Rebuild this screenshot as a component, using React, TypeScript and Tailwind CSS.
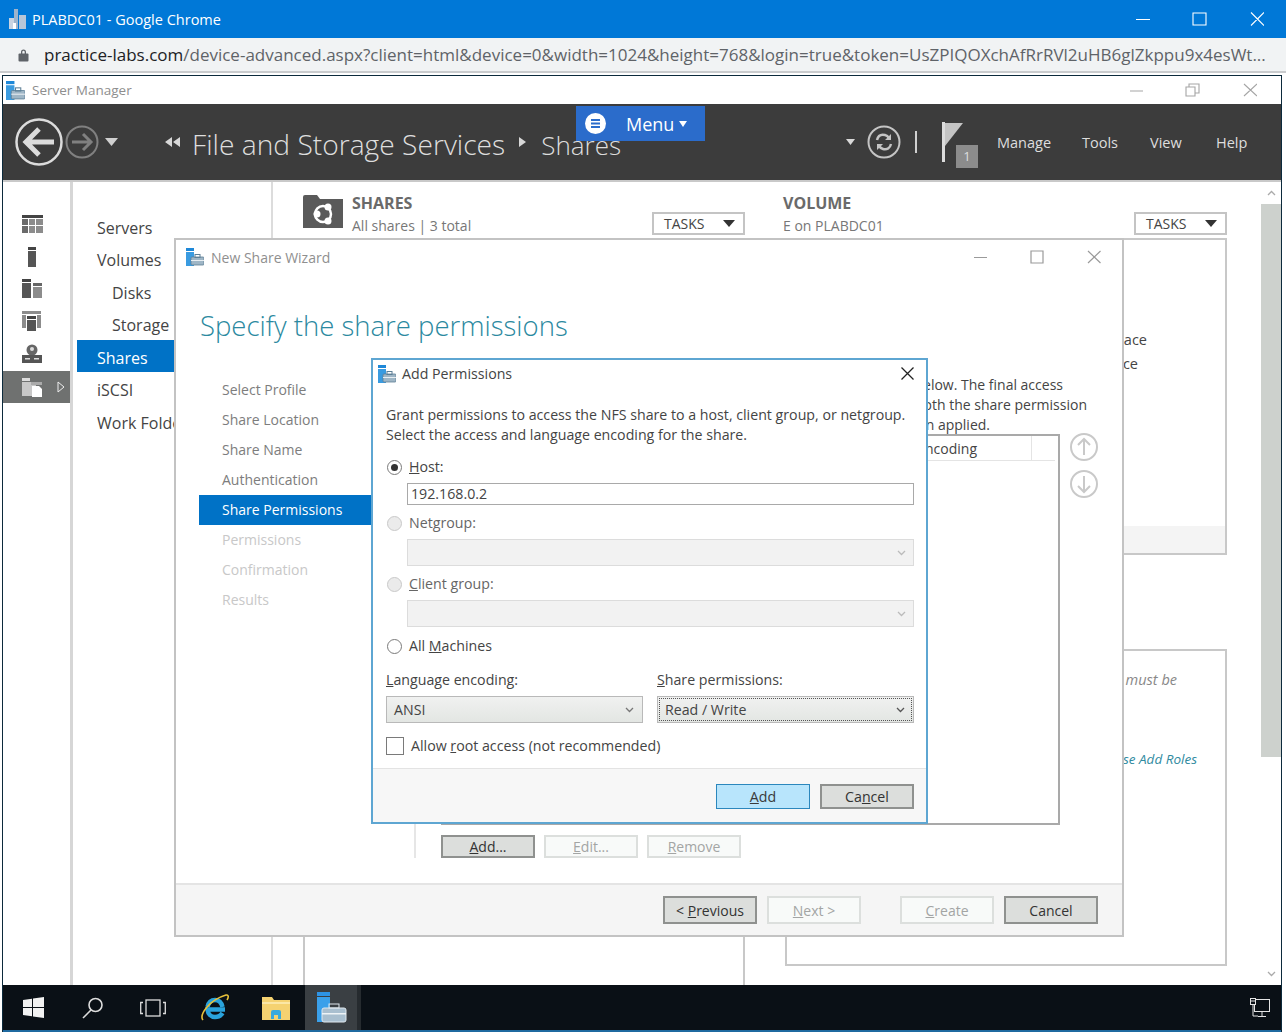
const SmIcon = ({ className }: { className: string }) => (
  <svg className={className} viewBox="0 0 18 18">
    <rect x="0" y="0" width="8" height="3" fill="#1e88d8" />
    <rect x="0" y="4" width="8" height="14" fill="#3a9be0" />
    <rect x="5" y="9" width="13" height="8" rx="1" fill="#9fb6c6" stroke="#5d7f96" strokeWidth="0.8" />
    <rect x="9" y="6.5" width="5" height="3" fill="none" stroke="#5d7f96" />
    <rect x="5" y="12" width="13" height="1" fill="#e8eef2" />
  </svg>
)

const Btn = ({ children, kind = "normal", className = "" }: { children: React.ReactNode; kind?: "normal" | "off" | "main"; className?: string }) => {
  if (kind === "off") {
    return <div className={`w-[94px] flex items-center justify-center border-2 border-[#dcdfdd] bg-[#f8faf9] text-[#a3a5a4] ${className}`}>{children}</div>
  }
  if (kind === "main") {
    return <div className={`w-[94px] flex items-center justify-center border border-[#2b87bd] bg-[#b8e5fc] text-[#3a3a3a] ${className}`}>{children}</div>
  }
  return <div className={`w-[94px] flex items-center justify-center border-2 border-[#8f918f] bg-[#dcdedc] text-[#333] ${className}`}>{children}</div>
}

const Chevron = ({ color = "#777" }: { color?: string }) => (
  <svg className="w-[9px] h-[6px]" viewBox="0 0 9 6" fill="none" stroke={color} strokeWidth="1.3">
    <path d="M1 1l3.5 3.5L8 1" />
  </svg>
)

const Radio = ({ on = false, off = false }: { on?: boolean; off?: boolean }) => (
  <span className={`w-[15px] h-[15px] rounded-full border flex items-center justify-center ${off ? "border-[#c9c9c9] bg-[#ebebeb]" : "border-[#7a7a7a] bg-white"}`}>
    {on && <span className="w-[7px] h-[7px] rounded-full bg-[#333]" />}
  </span>
)

const railIcon = "w-[22px] h-[22px]"

const NavRail = () => (
  <div className="w-[70px] border-r-[3px] border-[#d6d6d6] pt-[26px] flex flex-col shrink-0">
    <div className="h-[32px] flex items-center pl-[19px]">
      <svg className={railIcon} viewBox="0 0 22 22" fill="#6a6a6a">
        <rect x="0" y="2" width="21" height="3" fill="#444" />
        <rect x="0" y="6" width="6" height="6" /><rect x="7" y="6" width="6" height="6" fill="#8c8c8c" /><rect x="14" y="6" width="7" height="6" fill="#8c8c8c" />
        <rect x="0" y="13" width="6" height="7" /><rect x="7" y="13" width="6" height="7" fill="#8c8c8c" /><rect x="14" y="13" width="7" height="7" fill="#8c8c8c" />
      </svg>
    </div>
    <div className="h-[33px] flex items-center pl-[19px]">
      <svg className={railIcon} viewBox="0 0 22 22" fill="#555">
        <rect x="6" y="1" width="8" height="3" fill="#444" />
        <rect x="6" y="5" width="8" height="16" />
      </svg>
    </div>
    <div className="h-[32px] flex items-center pl-[19px]">
      <svg className={railIcon} viewBox="0 0 22 22">
        <rect x="0" y="1" width="9" height="3" fill="#444" /><rect x="0" y="5" width="9" height="15" fill="#555" />
        <rect x="11" y="5" width="9" height="3" fill="#666" /><rect x="11" y="9" width="9" height="11" fill="#8c8c8c" />
      </svg>
    </div>
    <div className="h-[32px] flex items-center pl-[19px]">
      <svg className={railIcon} viewBox="0 0 22 22">
        <rect x="0" y="1" width="19" height="3" fill="#8c8c8c" /><rect x="0" y="5" width="4" height="13" fill="#8c8c8c" /><rect x="15" y="5" width="4" height="13" fill="#8c8c8c" />
        <rect x="5" y="6" width="9" height="3" fill="#444" /><rect x="5" y="10" width="9" height="11" fill="#555" />
      </svg>
    </div>
    <div className="h-[34px] flex items-center pl-[19px]">
      <svg className={railIcon} viewBox="0 0 22 22">
        <circle cx="10" cy="7" r="5.5" fill="#666" /><circle cx="10" cy="6" r="2" fill="#ddd" />
        <rect x="0" y="12" width="20" height="8" fill="#555" /><rect x="3" y="15" width="5" height="1.5" fill="#ddd" /><rect x="12" y="15" width="5" height="1.5" fill="#ddd" />
      </svg>
    </div>
    <div className="h-[32px] bg-[#6f7170] flex items-center pl-[19px] gap-[13px]">
      <svg className={railIcon} viewBox="0 0 22 22">
        <rect x="0" y="2" width="8" height="3" fill="#ddd" /><rect x="0" y="6" width="14" height="14" fill="#c8c8c8" />
        <rect x="9" y="6" width="11" height="3" fill="#aaa" /><path d="M10 10h7l3 3v8H10z" fill="#fff" />
      </svg>
      <svg className="w-[8px] h-[12px]" viewBox="0 0 8 12" fill="none" stroke="#eee"><path d="M1 1l6 5-6 5z" /></svg>
    </div>
  </div>
)

const NavList = () => (
  <div className="w-[200px] border-r-2 border-[#dcdcdc] pt-[28px] shrink-0 text-[16px] text-[#444] whitespace-nowrap overflow-hidden">
    <div className="h-[33px] flex items-center pl-[24px] pt-[3px]">Servers</div>
    <div className="h-[32px] flex items-center pl-[24px] pt-[1px]">Volumes</div>
    <div className="h-[33px] flex items-center pl-[39px] pt-[3px]">Disks</div>
    <div className="h-[32px] flex items-center pl-[39px] pt-[1px]">Storage Pools</div>
    <div className="h-[32px] ml-[4px] flex items-center pl-[20px] pt-[4px] bg-[#0072c6] text-white">Shares</div>
    <div className="h-[33px] flex items-center pl-[24px] pt-[3px]">iSCSI</div>
    <div className="h-[32px] flex items-center pl-[24px] pt-[3px]">Work Folders</div>
  </div>
)

const Tasks = () => (
  <div className="w-[93px] h-[23px] border-2 border-[#c4c4c4] bg-white flex items-center justify-between pl-[10px] pr-[8px] text-[14px] text-[#444]">
    TASKS
    <svg className="w-[12px] h-[7px]" viewBox="0 0 12 7" fill="#333"><path d="M0 0h12L6 7z" /></svg>
  </div>
)

const Background = () => (
  <div className="flex-1 flex min-w-0">
    <NavRail />
    <NavList />
    <div className="flex-1 flex min-w-0">
      <div className="w-[472px] pl-[30px] shrink-0 flex flex-col">
        <div className="flex h-[56px] pt-[13px]">
          <svg className="w-[40px] h-[33px] shrink-0" viewBox="0 0 40 33">
            <path d="M0 2a2 2 0 012-2h12l3 4h23v29H0z" fill="#5a5a5a" />
            <circle cx="20" cy="19" r="8" fill="none" stroke="#fff" strokeWidth="2.5" />
            <circle cx="25" cy="12" r="3.5" fill="#fff" /><circle cx="14" cy="19" r="3.5" fill="#fff" /><circle cx="25" cy="26" r="3.5" fill="#fff" />
          </svg>
          <div className="ml-[9px] w-[300px] leading-none">
            <div className="text-[16px] font-bold text-[#6a6a6a]">SHARES</div>
            <div className="text-[14px] text-[#777] mt-[8px]">All shares | 3 total</div>
          </div>
          <div className="mt-[17px]"><Tasks /></div>
        </div>
        <div className="flex-1 border-x-2 border-[#c8c8c8]" />
      </div>
      <div className="w-[444px] ml-[38px] pl-[2px] shrink-0 flex flex-col">
        <div className="flex justify-between h-[56px] pt-[13px] -ml-[2px]">
          <div className="leading-none">
            <div className="text-[16px] font-bold text-[#6a6a6a]">VOLUME</div>
            <div className="text-[14px] text-[#777] mt-[8px]">E on PLABDC01</div>
          </div>
          <div className="mt-[17px]"><Tasks /></div>
        </div>
        <div className="h-[317px] border-2 border-[#c8c8c8] flex flex-col text-[14.5px] text-[#444]">
          <div className="flex-1 pt-[88px] leading-[24px]">
            <div className="w-[360px] text-right">Free space</div>
            <div className="w-[351px] text-right">Free space</div>
          </div>
          <div className="h-[27px] bg-[#f4f4f4]" />
        </div>
        <div className="h-[317px] mt-[94px] border-2 border-[#c8c8c8] italic">
          <div className="mt-[18px] w-[390px] text-right text-[14.5px] text-[#888]">Services must be</div>
          <div className="mt-[58px] w-[410px] text-right text-[13.5px] text-[#2f8aa0]">use Add Roles</div>
        </div>
      </div>
      <div className="flex-1" />
      <div className="w-[20px] shrink-0 flex flex-col items-center">
        <div className="h-[22px] flex items-center"><svg className="w-[9px] h-[6px] rotate-180" viewBox="0 0 9 6" fill="none" stroke="#aaa" strokeWidth="1.3"><path d="M1 1l3.5 3.5L8 1" /></svg></div>
        <div className="h-[553px] w-full bg-[#cdd1cd]" />
        <div className="flex-1" />
        <div className="h-[22px] flex items-center"><Chevron color="#aaa" /></div>
      </div>
    </div>
  </div>
)

const Wizard = () => (
  <div className="absolute left-[174px] top-[238px] w-[950px] h-[699px] bg-white border-2 border-[#c3c3c3] flex flex-col text-[14px]">
    <div className="h-[34px] flex items-center pl-[10px] pr-[21px] shrink-0">
      <SmIcon className="w-[18px] h-[18px]" />
      <span className="ml-[7px] text-[#8f8f8f] flex-1">New Share Wizard</span>
      <svg className="w-[127px] h-[14px]" viewBox="0 0 127 14" fill="none" stroke="#9a9a9a" strokeWidth="1.2">
        <path d="M0 7.5h13M57 1h12v12H57zM114 1l12.500 12M126.500 1L114 13" />
      </svg>
    </div>
    <div className="h-[92px] pl-[24px] pt-[12px] flex items-center shrink-0 text-[27.5px] font-light text-[#2b89a0]">Specify the share permissions</div>
    <div className="h-[492px] flex shrink-0">
      <div className="w-[240px] border-r-2 border-[#e6e6e6] pt-[9px] pl-[23px]">
        <div className="h-[30px] pl-[23px] pb-[1px] flex items-center text-[#7d7d7d]">Select Profile</div>
        <div className="h-[30px] pl-[23px] pb-[1px] flex items-center text-[#7d7d7d]">Share Location</div>
        <div className="h-[30px] pl-[23px] pb-[1px] flex items-center text-[#7d7d7d]">Share Name</div>
        <div className="h-[30px] pl-[23px] pb-[1px] flex items-center text-[#7d7d7d]">Authentication</div>
        <div className="h-[30px] pl-[23px] pb-[1px] flex items-center bg-[#0072c6] text-white">Share Permissions</div>
        <div className="h-[30px] pl-[23px] pb-[1px] flex items-center text-[#c8c8c8]">Permissions</div>
        <div className="h-[30px] pl-[23px] pb-[1px] flex items-center text-[#c8c8c8]">Confirmation</div>
        <div className="h-[30px] pl-[23px] pb-[1px] flex items-center text-[#c8c8c8]">Results</div>
      </div>
      <div className="flex-1 pl-[25px] pt-[9px] text-[#444] whitespace-nowrap">
        <div className="leading-[20px]">
          <div className="w-[622px] text-right">below. The final access</div>
          <div className="w-[646px] text-right">both the share permission</div>
          <div className="w-[549px] text-right">when applied.</div>
        </div>
        <div className="flex -mt-[1px]">
          <div className="w-[619px] h-[391px] border-2 border-[#a9a9a9]">
            <div className="h-[25px] flex border-b border-[#e4e4e4] mr-[3px] items-center">
              <div className="w-[534px] text-right">Language encoding</div>
              <div className="w-[55px] h-full border-r border-[#e4e4e4]" />
            </div>
          </div>
          <div className="ml-[10px] flex flex-col gap-[9px] -mt-[1px]">
            <svg className="w-[28px] h-[28px]" viewBox="0 0 28 28" fill="none" stroke="#c9c9c9" strokeWidth="2"><circle cx="14" cy="14" r="13" /><path d="M14 22V7M8 12l6-6 6 6" /></svg>
            <svg className="w-[28px] h-[28px]" viewBox="0 0 28 28" fill="none" stroke="#c9c9c9" strokeWidth="2"><circle cx="14" cy="14" r="13" /><path d="M14 6v15M8 16l6 6 6-6" /></svg>
          </div>
        </div>
        <div className="flex gap-[9px] mt-[10px] h-[23px]">
          <Btn><span><u>A</u>dd...</span></Btn>
          <Btn kind="off"><span><u>E</u>dit...</span></Btn>
          <Btn kind="off"><span><u>R</u>emove</span></Btn>
        </div>
      </div>
    </div>
    <div className="flex-1 mt-[25px] bg-[#f5f5f5] border-t-2 border-[#e4e4e4] flex items-center pl-[487px]">
      <Btn className="h-[28px]"><span>&lt; <u>P</u>revious</span></Btn>
      <Btn kind="off" className="h-[28px] ml-[10px]"><span><u>N</u>ext &gt;</span></Btn>
      <Btn kind="off" className="h-[28px] ml-[39px]"><span><u>C</u>reate</span></Btn>
      <Btn className="h-[28px] ml-[10px]">Cancel</Btn>
    </div>
  </div>
)

const Dialog = () => (
  <div className="absolute left-[371px] top-[358px] w-[557px] h-[466px] bg-white border-2 border-[#5ea6d2] flex flex-col text-[14.2px] text-[#444] whitespace-nowrap">
    <div className="h-[27px] flex items-center pl-[5px] pr-[12px] shrink-0">
      <SmIcon className="w-[18px] h-[18px]" />
      <span className="ml-[6px] flex-1 text-[#444]">Add Permissions</span>
      <svg className="w-[13px] h-[13px]" viewBox="0 0 13 13" fill="none" stroke="#222" strokeWidth="1.3"><path d="M0.5 0.5l12 12M12.5 0.5l-12 12" /></svg>
    </div>
    <div className="pl-[13px] pr-[12px] pt-[18px]">
      <div className="leading-[20px]">
        <div>Grant permissions to access the NFS share to a host, client group, or netgroup.</div>
        <div>Select the access and language encoding for the share.</div>
      </div>
      <div className="h-[22px] mt-[11px] flex items-center gap-[7px] pl-[1px]"><Radio on /><span><u>H</u>ost:</span></div>
      <div className="h-[22px] mt-[5px] ml-[21px] border border-[#a9a9a9] flex items-center pl-[3px]">192.168.0.2</div>
      <div className="h-[22px] mt-[7px] flex items-center gap-[7px] pl-[1px] text-[#666]"><Radio off /><span>Net<u>g</u>roup:</span></div>
      <div className="h-[27px] mt-[5px] ml-[21px] border border-[#dcdcdc] bg-[#f2f2f2] flex items-center justify-end pr-[7px]"><Chevron color="#bbb" /></div>
      <div className="h-[22px] mt-[7px] flex items-center gap-[7px] pl-[1px] text-[#666]"><Radio off /><span><u>C</u>lient group:</span></div>
      <div className="h-[27px] mt-[5px] ml-[21px] border border-[#dcdcdc] bg-[#f2f2f2] flex items-center justify-end pr-[7px]"><Chevron color="#bbb" /></div>
      <div className="h-[22px] mt-[8px] flex items-center gap-[7px] pl-[1px]"><Radio /><span>All <u>M</u>achines</span></div>
      <div className="h-[22px] mt-[12px] flex items-center">
        <span className="w-[271px]"><u>L</u>anguage encoding:</span>
        <span><u>S</u>hare permissions:</span>
      </div>
      <div className="h-[27px] mt-[5px] flex gap-[14px]">
        <div className="w-[257px] border border-[#b9b9b9] bg-gradient-to-b from-[#f0f1f0] to-[#e3e6e3] flex items-center justify-between pl-[7px] pr-[8px]">ANSI<Chevron /></div>
        <div className="w-[257px] border border-[#b9b9b9] bg-gradient-to-b from-[#f0f1f0] to-[#e3e6e3] p-[1px]">
          <div className="h-full border border-dotted border-[#555] flex items-center justify-between pl-[5px] pr-[6px]">Read / Write<Chevron color="#555" /></div>
        </div>
      </div>
      <div className="h-[22px] mt-[12px] flex items-center gap-[7px]">
        <span className="w-[18px] h-[18px] border border-[#7a7a7a] bg-white" />
        <span>Allow <u>r</u>oot access (not recommended)</span>
      </div>
    </div>
    <div className="flex-1 mt-[11px] bg-[#f7f7f7] border-t border-[#e3e3e3] flex items-start justify-end pt-[15px] pr-[12px] gap-[10px]">
      <Btn kind="main" className="h-[25px]"><span><u>A</u>dd</span></Btn>
      <Btn className="h-[25px]"><span>Ca<u>n</u>cel</span></Btn>
    </div>
  </div>
)

const Taskbar = () => (
  <div className="h-[47px] shrink-0 bg-[#0a1016] border-b-2 border-[#1f6aa0] flex items-center">
    <div className="w-[60px] flex justify-center pl-[1px]">
      <svg className="w-[21px] h-[21px]" viewBox="0 0 21 21" fill="#f2f2f2"><path d="M0 3l9-1.3V10H0zM10 1.5L21 0v10H10zM0 11h9v8.3L0 18zM10 11h11v10l-11-1.5z" /></svg>
    </div>
    <div className="w-[62px] flex justify-center -ml-[1px]">
      <svg className="w-[22px] h-[22px]" viewBox="0 0 22 22" fill="none" stroke="#ddd" strokeWidth="1.6"><circle cx="13.5" cy="8" r="6.5" /><path d="M9 13l-8 8" /></svg>
    </div>
    <div className="w-[62px] flex justify-center -ml-[2px]">
      <svg className="w-[26px] h-[18px]" viewBox="0 0 26 18" fill="none" stroke="#ddd" strokeWidth="1.3"><rect x="6" y="1" width="14" height="16" /><path d="M3 3.5H0.7v11H3M23 3.5h2.3v11H23" /></svg>
    </div>
    <div className="w-[62px] flex justify-center">
      <svg className="w-[30px] h-[30px]" viewBox="0 0 30 30" fill="none">
        <path d="M25 16.5H7.5C8 21 11 24 15 24c3.5 0 6-1.5 7.5-4" stroke="#2aa3dc" strokeWidth="4.5" />
        <path d="M7.5 14C8.5 9.5 11 7 15 7s6.5 2.5 7.5 7" stroke="#2aa3dc" strokeWidth="4.5" />
        <path d="M3 27C-1 22 9 7 26 2c2.5-.5 3 2 1 5" stroke="#e8c13a" strokeWidth="1.6" />
      </svg>
    </div>
    <div className="w-[60px] flex justify-center">
      <svg className="w-[28px] h-[24px]" viewBox="0 0 28 24">
        <path d="M0 1h10l2 3h16v20H0z" fill="#f5d271" />
        <rect x="0" y="6" width="28" height="2" fill="#fbe7a6" />
        <path d="M9 23v-7a2 2 0 012-2h6a2 2 0 012 2v7h-3v-4h-4v4z" fill="#39a9dc" />
      </svg>
    </div>
    <div className="w-[56px] h-full bg-[#3a3f43] flex items-center justify-center border-r-[4px] border-[#262b2f] -ml-[1px]">
      <svg className="w-[32px] h-[32px]" viewBox="0 0 32 32">
        <rect x="2" y="0" width="13" height="4" fill="#2d94e6" />
        <rect x="2" y="5" width="13" height="25" fill="#3aa0ea" />
        <rect x="7" y="16" width="24" height="14" rx="2" fill="#a9bfcf" stroke="#dfe8ee" />
        <rect x="14" y="12" width="10" height="4" fill="none" stroke="#dfe8ee" />
        <rect x="7" y="21" width="24" height="1.5" fill="#eef3f6" />
      </svg>
    </div>
    <div className="flex-1" />
    <svg className="w-[21px] h-[20px] mr-[10px]" viewBox="0 0 21 20" fill="none" stroke="#e4e4e4" strokeWidth="1">
      <rect x="4.5" y="1.5" width="15" height="12" />
      <path d="M12 14v4M8 18.5h8" />
      <rect x="0.5" y="0.5" width="5" height="6" fill="#0a1016" />
      <path d="M1 3h4M3 7v11h5" />
    </svg>
  </div>
)

export default function App() {
  return (
    <div className="relative w-[1286px] h-[1032px] overflow-hidden bg-white font-['Open_Sans',sans-serif] flex flex-col">
      <div className="h-[38px] shrink-0 bg-[#0078d7] flex items-center text-white text-[14.5px] pl-[9px]">
        <svg className="w-[17px] h-[20px]" viewBox="0 0 17 20">
          <rect x="5" y="0" width="4" height="20" fill="#9fb4cc" />
          <rect x="0" y="9" width="5" height="11" fill="#c9d4e2" />
          <rect x="10" y="6" width="7" height="14" fill="#b7c6d8" />
          <rect x="4" y="14" width="3" height="6" fill="#fff" />
        </svg>
        <span className="ml-[6px] flex-1 pt-[2px]">PLABDC01 - Google Chrome</span>
        <svg className="w-[128px] h-[14px] mr-[22px]" viewBox="0 0 128 14" fill="none" stroke="#fff" strokeWidth="1.1">
          <path d="M0 7.5h14M57 1h13v12H57zM115 0.5l13 13M128 0.5l-13 13" />
        </svg>
      </div>
      <div className="h-[35px] shrink-0 bg-[#f1f3f4] border-b-2 border-[#c9cbcd] flex items-center pl-[18px] text-[17px] whitespace-nowrap overflow-hidden">
        <svg className="w-[11px] h-[14px] shrink-0" viewBox="0 0 11 14" fill="#5f6368">
          <path d="M3 6V4a2.5 2.5 0 015 0v2h-1.3V4a1.2 1.2 0 00-2.4 0v2z" />
          <rect x="0.5" y="5.5" width="10" height="8" rx="1" />
        </svg>
        <span className="ml-[15px] w-[1224px] overflow-hidden text-[#5f6368]"><span className="text-[#202124]">practice-labs.com</span>/device-advanced.aspx?client=html&amp;device=0&amp;width=1024&amp;height=768&amp;login=true&amp;token=UsZPIQOXchAfRrRVl2uHB6glZkppu9x4esWt...</span>
      </div>
      <div className="flex-1 mt-[2px] ml-[2px] mr-[4px] border-x border-t border-[#0c2a3c] flex flex-col min-h-0">
        <div className="h-[28px] shrink-0 flex items-center pl-[3px] pr-[24px]">
          <SmIcon className="w-[19px] h-[19px]" />
          <span className="ml-[7px] flex-1 text-[13.5px] text-[#8e8e8e]">Server Manager</span>
          <svg className="w-[127px] h-[14px]" viewBox="0 0 127 14" fill="none" stroke="#a5a5a5" strokeWidth="1.1">
            <path d="M0 8h13M56 4h9v9h-9zM59 4V1h10v9h-4M114 1l13 12M127 1l-13 12" />
          </svg>
        </div>
        <div className="h-[78px] shrink-0 bg-[#3c3c3c] border-b-2 border-[#c9c9c9] flex items-center text-[#dedede] whitespace-nowrap">
          <svg className="w-[48px] h-[48px] ml-[12px] shrink-0" viewBox="0 0 48 48" fill="none" stroke="#dcdcdc">
            <circle cx="24" cy="24" r="22.5" strokeWidth="2.5" />
            <path d="M39 24H12M24 11L11 24l13 13" strokeWidth="5" />
          </svg>
          <svg className="w-[34px] h-[34px] ml-[2px] shrink-0" viewBox="0 0 34 34" fill="none" stroke="#808080">
            <circle cx="17" cy="17" r="15.5" strokeWidth="2" />
            <path d="M7 17h18M18 9l8 8-8 8" strokeWidth="3" />
          </svg>
          <svg className="w-[13px] h-[8px] ml-[6px] shrink-0" viewBox="0 0 13 8" fill="#d0d0d0"><path d="M0 0h13L6.500 8z" /></svg>
          <svg className="w-[16px] h-[10px] ml-[47px] shrink-0" viewBox="0 0 16 10" fill="#d8d8d8"><path d="M7 0v10L0 5zM15 0v10L8 5z" /></svg>
          <span className="ml-[11px] text-[28.2px] font-light leading-none pt-[5px]">File and Storage Services</span>
          <svg className="w-[7px] h-[10px] ml-[14px] shrink-0" viewBox="0 0 7 10" fill="#d8d8d8"><path d="M0 0v10l7-5z" /></svg>
          <span className="ml-[15px] text-[26px] font-light leading-none pt-[5px]">Shares</span>
          <div className="flex-1" />
          <svg className="w-[9px] h-[6px] shrink-0" viewBox="0 0 9 6" fill="#d8d8d8"><path d="M0 0h9L4.500 6z" /></svg>
          <svg className="w-[34px] h-[34px] ml-[12px] shrink-0" viewBox="0 0 34 34" fill="none" stroke="#c4c4c4">
            <circle cx="17" cy="17" r="15.5" strokeWidth="2" />
            <path d="M10 15c1-4 4-6 8-5 2 .5 3 1.500 4 3M24 19c-1 4-4 6-8 5-2-.5-3-1.500-4-3" strokeWidth="2.500" />
            <path d="M24 9v6h-6zM10 25v-6h6z" fill="#c4c4c4" stroke="none" />
          </svg>
          <div className="w-[2px] h-[22px] bg-[#d0d0d0] ml-[14px] shrink-0" />
          <div className="relative w-[37px] h-[46px] ml-[25px] mt-[6px] shrink-0">
            <svg className="w-[37px] h-[46px]" viewBox="0 0 37 46">
              <rect x="0" y="0" width="3" height="40" fill="#dcdcdc" />
              <path d="M3 1h18L3 24z" fill="#c4c4c4" />
              <rect x="14" y="23" width="22" height="23" fill="#8c8c8c" />
            </svg>
            <span className="absolute left-[14px] top-[23px] w-[22px] h-[23px] flex items-center justify-center text-[13px] text-[#dedede]">1</span>
          </div>
          <div className="w-[60px] ml-[18px] pt-[2px] text-[14.5px]">Manage</div>
          <div className="ml-[25px] w-[43px] pt-[2px] text-[14.5px]">Tools</div>
          <div className="ml-[25px] w-[41px] pt-[2px] text-[14.5px]">View</div>
          <div className="ml-[25px] w-[36px] mr-[29px] pt-[2px] text-[14.5px]">Help</div>
        </div>
        <Background />
        <Taskbar />
      </div>
      <div className="absolute left-[576px] top-[106px] w-[129px] h-[35px] bg-[#2b6ccb] flex items-center text-white">
        <svg className="w-[21px] h-[21px] ml-[9px]" viewBox="0 0 21 21">
          <circle cx="10.500" cy="10.500" r="10.500" fill="#fff" />
          <path d="M6 7h9M6 10.500h9M6 14h9" stroke="#2b6ccb" strokeWidth="2" />
        </svg>
        <span className="ml-[20px] text-[18px] leading-none">Menu</span>
        <svg className="w-[8px] h-[6px] ml-[5px]" viewBox="0 0 8 6" fill="#fff"><path d="M0 0h8L4 6z" /></svg>
      </div>
      <Wizard />
      <Dialog />
    </div>
  )
}
